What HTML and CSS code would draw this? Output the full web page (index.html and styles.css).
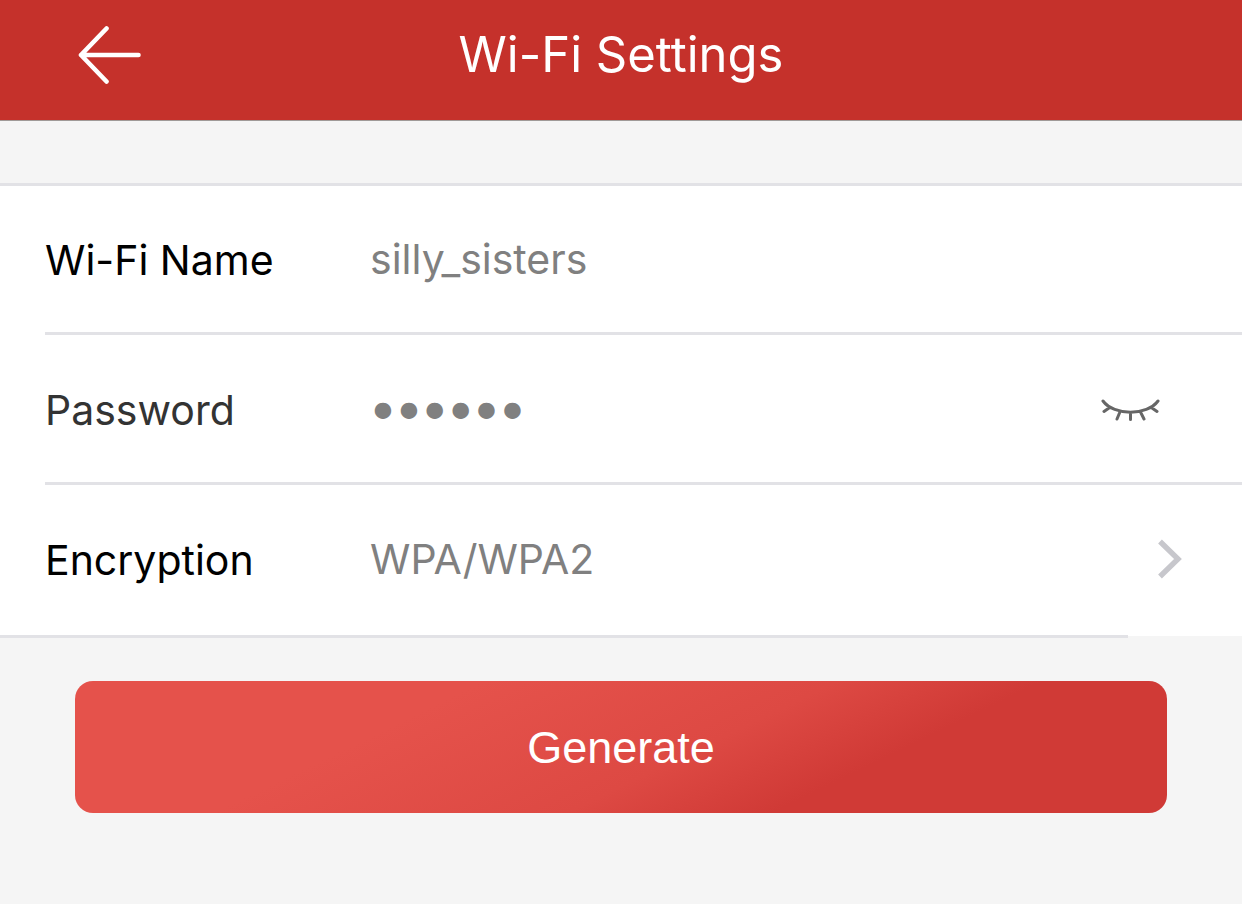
FILE: index.html
```
<!DOCTYPE html>
<html lang="en">
<head>
  <meta charset="UTF-8">
  <meta name="viewport" content="width=device-width, initial-scale=1">
  <title>Wi-Fi Settings</title>
  <link rel="stylesheet" href="styles.css">
</head>
<body>
  <header class="navbar">
    <button class="back" type="button" aria-label="Back">
      <svg width="64" height="60" viewBox="0 0 64 60" fill="none" stroke="#fff" stroke-width="4.6" stroke-linecap="round" stroke-linejoin="round">
        <path d="M60.500 30H3M28.500 3.500L3 30L28.500 56.500"/>
      </svg>
    </button>
    <h1>Wi-Fi Settings</h1>
  </header>

  <form>
    <div class="rows">
      <div class="row">
        <label for="ssid">Wi-Fi Name</label>
        <input id="ssid" type="text" value="silly_sisters">
      </div>
      <div class="row">
        <label class="soft" for="password">Password</label>
        <input id="password" type="password" value="secret">
        <button class="reveal" type="button" aria-label="Show password">
          <svg width="60" height="24" viewBox="0 0 60 24" fill="none" stroke="#666" stroke-width="3" stroke-linecap="round">
            <path d="M3 4C14 19 47 19 58 4M9 11L4 14.500M19.500 16L17 22M30.500 17V22.500M41 16L44 22M52 11L57 14.500"/>
          </svg>
        </button>
      </div>
      <div class="row">
        <label for="encryption">Encryption</label>
        <select id="encryption">
          <option>WPA/WPA2</option>
          <option>WEP</option>
          <option>None</option>
        </select>
        <svg class="chevron" width="24" height="40" viewBox="0 0 24 40" fill="none" stroke="#c7c7cc" stroke-width="5.4">
          <path d="M2 2.500L20 20L2 37.500"/>
        </svg>
      </div>
    </div>
    <div class="actions">
      <button class="generate" type="button">Generate</button>
    </div>
  </form>
</body>
</html>
```

FILE: styles.css
```
* {box-sizing:border-box;}
body {margin:0; background:#f5f5f5; font-family:Inter, "Liberation Sans", sans-serif; color:#000;}
button, input, select {margin:0; padding:0; border:none; outline:none; background:none; font:inherit; cursor:pointer;}
svg {display:block;}

.navbar {display:grid; grid-template-columns:160px 1fr 160px; align-items:center; height:121px; padding-bottom:10px; background:#c5312b; border-bottom:1px solid #a09a98;}
.back {justify-self:end; margin-right:18px;}
.navbar h1 {margin:0; font-size:49px; font-weight:400; line-height:60px; text-align:center; color:#fff;}

.rows {position:relative; margin-top:62px; background:#fff; border-top:3px solid #e2e2e6;}
.row {display:flex; align-items:center; height:150px; margin-left:45px; border-bottom:3px solid #e2e2e6;}
.row:first-child {height:149px;}
.row:last-child {height:151px; border-bottom-color:#fff;}
.row label {width:325px; padding-top:2px; font-size:41px;}
.row label.soft {color:#333;}
.row input, .row select {flex:1; min-width:0; height:60px; font-size:41px; color:#808080; appearance:none; cursor:text;}
/* bigger, heavier dots */
.row input[type=password] {padding-bottom:4px; font-size:46px; -webkit-text-stroke:2px #808080;}
.row select {cursor:pointer;}
.reveal {margin-right:82px;}
.chevron {margin-right:60px;}
/* closing line stops short of the right edge */
.rows::after {content:""; position:absolute; left:0; right:114px; bottom:-2px; height:3px; background:#e2e2e6;}

.actions {padding:45px 75px;}
.generate {width:100%; height:132px; padding-top:2px; border-radius:18px; color:#fff; font-family:"Liberation Sans", Arial, sans-serif; font-size:45px; background:linear-gradient(154deg, #e5524b 30%, #dd4943 56%, #d03a36 71%);}
```
